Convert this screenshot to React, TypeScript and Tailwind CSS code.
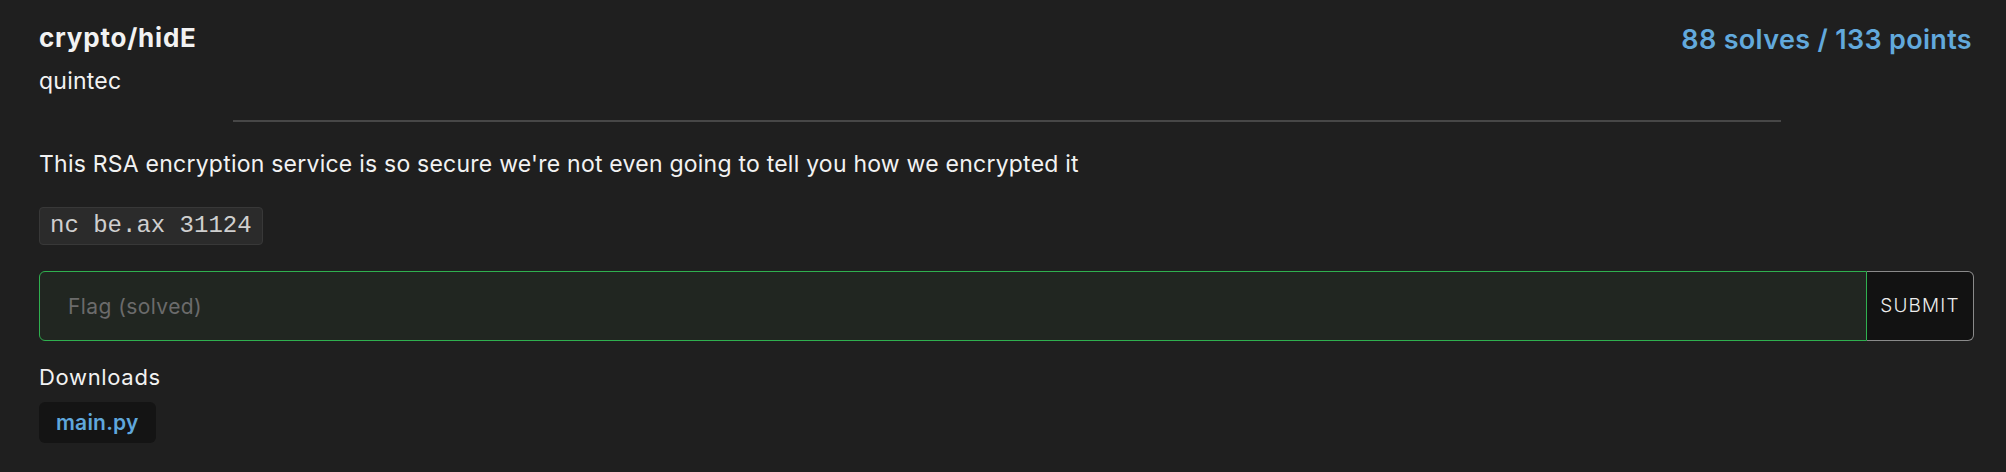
import React from 'react';

const font = { fontFamily: 'Inter, "Noto Sans", sans-serif' };

export default function App() {
  return (
    <div
      className="h-[472px] w-full bg-[#1f1f1f] pl-[39px] pr-[32px] pt-[22px] text-[#f2f2f2]"
      style={font}
    >
      {/* header */}
      <div className="flex items-start justify-between">
        <div>
          <div className="text-[26px] font-bold leading-[32px] tracking-[0.03em]">crypto/hidE</div>
          <div className="mt-[12px] text-[23px] leading-[30px] tracking-[0.01em]">quintec</div>
        </div>
        <div className="pt-[2px] pr-[2px] text-[27px] font-semibold leading-[32px] tracking-[0.012em] text-[#62a9dc]">
          88 solves / 133 points
        </div>
      </div>

      <div className="mx-auto mt-[24px] h-[2px] w-4/5 bg-[#474747]" />

      <p className="mt-[27px] text-[23px] leading-[30px] tracking-[0.01em]">
        This RSA encryption service is so secure we're not even going to tell you how we encrypted it
      </p>

      <div className="mt-[28px] flex">
        <code
          className="flex h-[38px] items-center rounded-[4px] border border-[#383838] bg-[#2b2b2b] px-[10px] text-[24px] text-[#cfcfcf]"
          style={{ fontFamily: '"Liberation Mono", monospace' }}
        >
          nc be.ax 31124
        </code>
      </div>

      {/* flag form */}
      <div className="mt-[26px] flex h-[70px]">
        <input
          placeholder="Flag (solved)"
          className="h-full min-w-0 flex-1 rounded-l-[6px] border-[1.5px] border-[#2fb04f] bg-[#212621] pl-[28px] text-[21px] tracking-[0.02em] text-white outline-none placeholder:text-[#6b6b6b]"
        />
        <button className="h-full w-[107px] rounded-r-[6px] border border-l-0 border-[#8a8a8a] bg-[#121212] text-[19px] font-light uppercase tracking-[0.06em] text-[#ececec]">
          Submit
        </button>
      </div>

      <div className="mt-[22px] text-[22px] leading-[28px] tracking-[0.03em]">Downloads</div>
      <div className="mt-[11px] flex">
        <a className="flex h-[41px] items-center rounded-[6px] bg-[#141414] px-[17px] text-[21px] font-semibold tracking-[0.01em] text-[#5fa7dc]">
          main.py
        </a>
      </div>
    </div>
  );
}
